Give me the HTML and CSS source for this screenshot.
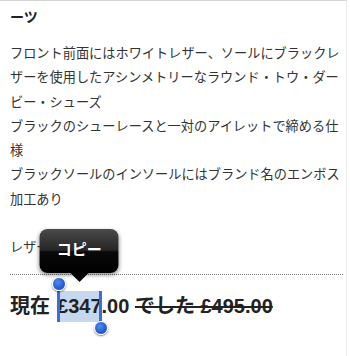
FILE: index.html
```html
<!DOCTYPE html>
<html lang="ja">
<head>
<meta charset="utf-8">
<link rel="stylesheet" href="styles.css">
</head>
<body>
<div class="page">
  <h2 class="title">ーツ</h2>
  <div class="desc">
    <p class="item">フロント前面にはホワイトレザー、ソールにブラックレザーを使用したアシンメトリーなラウンド・トウ・ダービー・シューズ</p>
    <p class="item">ブラックのシューレースと一対のアイレットで締める仕様</p>
    <p class="item">ブラックソールのインソールにはブランド名のエンボス加工あり</p>
  </div>
  <p class="material">レザー</p>
  <div class="rule"></div>
  <div class="price">現在 <span class="sel">£347<span class="bar bar-start"></span><span class="knob knob-start"></span><span class="bar bar-end"></span><span class="knob knob-end"></span><span class="tip">コピー</span></span>.00 <del class="was">でした £495.00</del></div>
</div>
</body>
</html>
```
FILE: styles.css
```css
html, body {
  margin: 0;
  padding: 0;
  background: #fff;
}
.page {
  width: 336px;
  height: 355px;
  padding-left: 10px;
  border-top: 1px solid #d4d4d4;
  border-right: 1px solid #ececec;
  font-family: "Noto Sans CJK JP", "Liberation Sans", sans-serif;
  color: #333;
}
.title {
  margin: 5px 0 0;
  font-size: 14px;
  line-height: 20px;
  font-weight: bold;
  color: #222;
}
.desc {
  margin-top: 15px;
  width: 332px;
}
.item {
  margin: 0;
  font-size: 13.2px;
  line-height: 24.3px;
}
.material {
  margin: 24px 0 0;
  font-size: 13.2px;
  line-height: 24px;
}
.rule {
  margin-top: 15px;
  width: 333px;
  border-top: 1px dotted #7a7a7a;
}
.price {
  margin-top: 16px;
  font-family: "Liberation Sans", "Noto Sans CJK JP", sans-serif;
  font-weight: bold;
  font-size: 20px;
  line-height: 31px;
  color: #222;
}
.sel {
  position: relative;
  display: inline-block;
  margin-left: 1.5px;
  background: #c6d8ee;
}
.bar {
  position: absolute;
  top: 0;
  bottom: 0;
  width: 3px;
  background: #3b6de0;
}
.bar-start { left: 0; }
.bar-end { right: 0; }
.knob {
  position: absolute;
  width: 12px;
  height: 12px;
  border-radius: 50%;
  border: 1px solid #fff;
  background: radial-gradient(circle at 40% 35%, #4f8af0, #1d55c8 70%);
  box-shadow: 0 1px 2px rgba(0,0,0,0.5);
}
.knob-start { left: -5px; top: -14px; }
.knob-end { right: -6px; bottom: -13px; }
.tip {
  position: absolute;
  left: 50%;
  bottom: calc(100% + 18px);
  transform: translateX(-50%);
  width: 79px;
  height: 44px;
  border-radius: 8px;
  background: linear-gradient(#4a4a4a 0%, #262626 48%, #0a0a0a 52%, #000 100%);
  box-shadow: 0 2px 4px rgba(0,0,0,0.45);
  color: #fff;
  font-family: "Noto Sans CJK JP", sans-serif;
  font-weight: bold;
  font-size: 15px;
  line-height: 40px;
  text-align: center;
}
.tip::after {
  content: "";
  position: absolute;
  left: 50%;
  top: 100%;
  margin-left: -9px;
  border-left: 9px solid transparent;
  border-right: 9px solid transparent;
  border-top: 9px solid #000;
}
.was {
  text-decoration: line-through;
  text-decoration-thickness: 1.5px;
}
```
